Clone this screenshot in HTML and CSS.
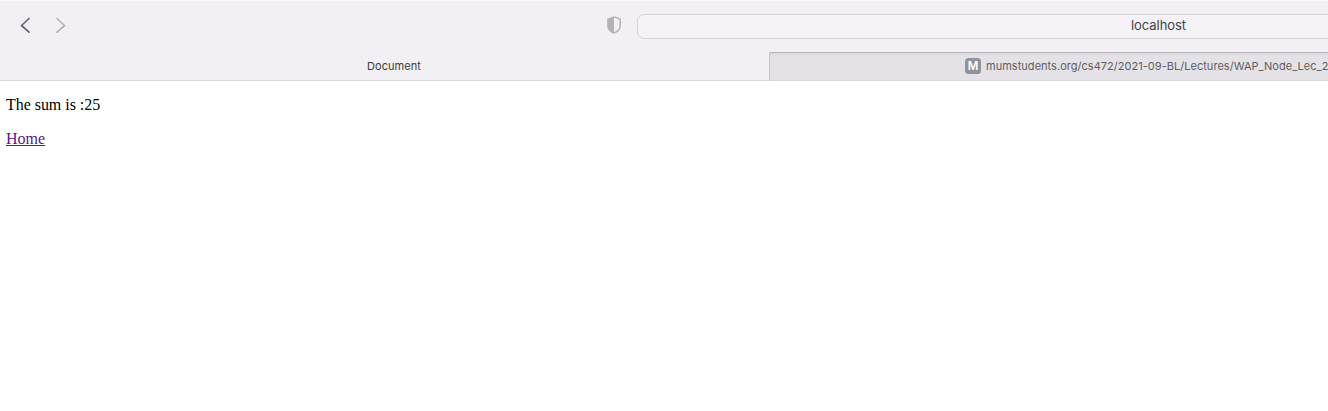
FILE: index.html
```html
<!DOCTYPE html>
<html lang="en">
<head>
<meta charset="utf-8">
<title>Document</title>
<link rel="stylesheet" href="styles.css">
</head>
<body>
<header class="browser">
  <div class="toolbar">
    <nav class="history">
      <svg class="arrow back" viewBox="0 0 10 16"><path d="M9 1.5 1.5 8.5 9 15.2"/></svg>
      <svg class="arrow forward" viewBox="0 0 10 16"><path d="M1 1.5 8.5 8.5 1 15.2"/></svg>
    </nav>
    <svg class="shield" viewBox="0 0 14 18"><path class="shield-half" d="M7 .2.2 2.7v7C.2 13.5 3 16.2 7 17.8Z"/><path class="shield-line" d="M7 .9 13.2 3.1v6.6c0 3.4-2.5 5.8-6.2 7.3"/></svg>
    <div class="address"><span class="host">localhost</span></div>
  </div>
  <div class="tabs">
    <div class="tab active"><span class="label">Document</span></div>
    <div class="tab inactive"><span class="favicon">M</span><span class="label url">mumstudents.org/cs472/2021-09-BL/Lectures/WAP_Node_Lec_2</span></div>
  </div>
</header>
<main class="page">
  <p class="sum">The sum is :25</p>
  <a class="home" href="#">Home</a>
</main>
</body>
</html>
```
FILE: styles.css
```css
body {
  margin: 0;
  background: #fff;
  overflow: hidden;
}
.browser {
  background: #f2f0f5;
  font-family: Inter, sans-serif;
}
.toolbar {
  box-sizing: border-box;
  height: 52px;
  display: flex;
  align-items: flex-start;
  overflow: hidden;
  border-top: 1px solid #f9f8fb;
}
.history {
  flex: none;
  display: flex;
  gap: 26px;
  width: 586px;
  padding: 16px 0 0 20px;
  box-sizing: border-box;
}
.arrow {
  width: 10px;
  height: 16px;
  fill: none;
  stroke-width: 1.7;
  stroke-linecap: round;
  stroke-linejoin: round;
}
.back { stroke: #67646b; }
.forward { stroke: #b5b3b8; }
.shield {
  flex: none;
  width: 14px;
  height: 18px;
  margin: 15px 0 0 20.5px;
}
.shield-half { fill: #b4b2b7; }
.shield-line {
  fill: none;
  stroke: #b4b2b7;
  stroke-width: 1.5;
}
.address {
  box-sizing: border-box;
  flex: none;
  width: 1042px;
  height: 25px;
  margin: 13px 0 0 16.5px;
  padding-bottom: 3px;
  border: 1px solid #d6d4d9;
  border-radius: 7px;
  background: #f4f2f7;
  display: flex;
  justify-content: center;
  align-items: center;
}
.host {
  padding-left: 1px;
  font-size: 13px;
  line-height: 16px;
  letter-spacing: -0.05px;
  color: #454349;
}
.tabs {
  display: flex;
  height: 29px;
  overflow: hidden;
}
.tab {
  box-sizing: border-box;
  flex: none;
  display: flex;
  align-items: center;
  border-bottom: 1px solid #d7d5d9;
  font-size: 11px;
  white-space: nowrap;
}
.active {
  width: 769px;
  padding-left: 367px;
  letter-spacing: 0.06px;
  color: #3d3b40;
}
.inactive {
  width: 770px;
  padding: 0 0 1px 195px;
  border-left: 1px solid #cac8cd;
  border-top: 1px solid #b9b7bc;
  background: linear-gradient(#dad8dd, #e4e2e7 3px);
  color: #5f5d63;
}
.url { letter-spacing: 0.03px; }
.favicon {
  width: 16px;
  height: 16px;
  margin-right: 5px;
  border-radius: 3.5px;
  background: #93929b;
  color: #fff;
  font-size: 11.5px;
  font-weight: 600;
  line-height: 16px;
  text-align: center;
}
.page {
  padding: 15px 6px 0;
  font: 16px/18px "Liberation Serif", serif;
  color: #000;
}
.sum {
  margin: 0 0 16px;
  letter-spacing: -0.04px;
}
.home { color: #551a8b; }
```
